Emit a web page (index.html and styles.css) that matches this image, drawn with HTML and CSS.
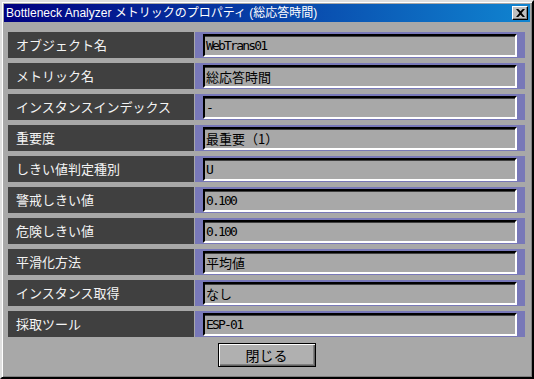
FILE: index.html
```html
<!DOCTYPE html>
<html lang="ja">
<head>
    <meta charset="UTF-8">
    <title>Bottleneck Analyzer メトリックのプロパティ</title>
    <link rel="stylesheet" href="styles.css">
</head>
<body>

<div class="window">
    <div class="titlebar">
        <span class="title">Bottleneck Analyzer メトリックのプロパティ (総応答時間)</span>
        <button class="close-btn" aria-label="閉じる">
            <svg width="8" height="7" viewBox="0 0 8 7"><path d="M0 0h2l2 2 2-2h2L5 3.5 8 7H6L4 5 2 7H0l3-3.5z" fill="#000"/></svg>
        </button>
    </div>

    <div class="content">
        <!-- property rows -->
        <div class="row">
            <div class="label">オブジェクト名</div>
            <div class="value"><div class="field mono">WebTrans01</div></div>
        </div>
        <div class="row">
            <div class="label">メトリック名</div>
            <div class="value"><div class="field">総応答時間</div></div>
        </div>
        <div class="row">
            <div class="label">インスタンスインデックス</div>
            <div class="value"><div class="field mono">-</div></div>
        </div>
        <div class="row">
            <div class="label">重要度</div>
            <div class="value"><div class="field">最重要（1）</div></div>
        </div>
        <div class="row">
            <div class="label">しきい値判定種別</div>
            <div class="value"><div class="field mono">U</div></div>
        </div>
        <div class="row">
            <div class="label">警戒しきい値</div>
            <div class="value"><div class="field mono">0.100</div></div>
        </div>
        <div class="row">
            <div class="label">危険しきい値</div>
            <div class="value"><div class="field mono">0.100</div></div>
        </div>
        <div class="row">
            <div class="label">平滑化方法</div>
            <div class="value"><div class="field">平均値</div></div>
        </div>
        <div class="row">
            <div class="label">インスタンス取得</div>
            <div class="value"><div class="field">なし</div></div>
        </div>
        <div class="row">
            <div class="label">採取ツール</div>
            <div class="value"><div class="field mono">ESP-01</div></div>
        </div>

        <div class="actions">
            <button class="btn">閉じる</button>
        </div>
    </div>
</div>

</body>
</html>
```

FILE: styles.css
```css
body {
    margin: 0;
    padding: 0;
    background-color: #a8a8a8;
    font-family: "Noto Sans CJK JP", sans-serif;
}

.window {
    width: 534px;
    height: 379px;
    box-sizing: border-box;
    background-color: #a8a8a8;
    border: 2px solid;
    border-color: #dfdfdf #000 #000 #dfdfdf;
    box-shadow: inset 1px 1px #fff, inset -1px -1px #808080;
    padding: 2px;
}

.titlebar {
    height: 18px;
    display: flex;
    align-items: center;
    justify-content: space-between;
    padding: 0 2px 0 2px;
    background: linear-gradient(to right, #000080, #1084d0);
}

.title {
    color: #fff;
    font-family: "Liberation Sans", "Noto Sans CJK JP", sans-serif;
    font-size: 12px;
    line-height: 18px;
    white-space: nowrap;
}

.close-btn {
    width: 16px;
    height: 14px;
    padding: 0;
    display: flex;
    align-items: center;
    justify-content: center;
    background-color: #c0c0c0;
    border: 1px solid;
    border-color: #fff #000 #000 #fff;
    box-shadow: inset -1px -1px #808080;
}

.close-btn svg {
    width: 9px;
    height: 8px;
}

.content {
    padding: 10px 5px 0 4px;
    display: flex;
    flex-direction: column;
    gap: 5px;
}

.row {
    display: flex;
    height: 26px;
}

.label {
    width: 186px;
    box-sizing: border-box;
    padding-left: 8px;
    background-color: #404040;
    color: #f4f4f4;
    font-size: 13px;
    line-height: 26px;
    white-space: nowrap;
}

.value {
    flex: 1;
    background-color: #7878b8;
    padding: 2px 8px 1px 8px;
    margin-left: 1px;
}

.field {
    height: 23px;
    box-sizing: border-box;
    border: 2px solid;
    border-color: #000 #fff #fff #000;
    box-shadow: inset 0 1px #404040;
    padding-left: 1px;
    background-color: #a8a8a8;
    color: #000;
    font-size: 13px;
    line-height: 19px;
    white-space: nowrap;
}

.mono {
    font-family: "DejaVu Sans Mono", monospace;
    font-size: 13px;
    letter-spacing: -1.8px;
}

.actions {
    display: flex;
    justify-content: center;
    padding-top: 1px;
}

.btn {
    width: 98px;
    height: 24px;
    padding: 0;
    background-color: #b0b0b0;
    border: 1px solid #000;
    box-shadow: inset 1px 1px #fff, inset -1px -1px #606060, inset -2px -2px #808080;
    font-family: "Noto Sans CJK JP", sans-serif;
    font-size: 14px;
    color: #000;
    line-height: 20px;
}
```
